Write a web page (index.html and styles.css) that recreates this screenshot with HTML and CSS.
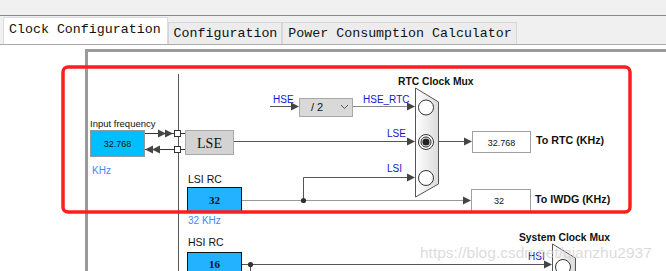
FILE: index.html
```html
<!DOCTYPE html>
<html>
<head>
<meta charset="utf-8">
<link rel="stylesheet" href="styles.css">
</head>
<body>
<div class="app">
  <div class="topbar"></div>
  <div class="tabs">
    <div class="tab active">Clock Configuration</div>
    <div class="tab">Configuration</div>
    <div class="tab">Power Consumption Calculator</div>
  </div>
  <div class="canvas">
    <svg class="diagram" width="666" height="226" viewBox="0 45 666 226" xmlns="http://www.w3.org/2000/svg">
      <defs>
        <linearGradient id="muxg" x1="0" y1="0" x2="1" y2="0">
          <stop offset="0" stop-color="#ffffff"/>
          <stop offset="1" stop-color="#dcdcdc"/>
        </linearGradient>
      </defs>
      <!-- canvas frame -->
      <path d="M86.5 271 V50.5 H666" fill="none" stroke="#9a9a9a" stroke-width="3"/>
      <!-- vertical bus -->
      <line x1="178.5" y1="74" x2="178.5" y2="271" stroke="#555" stroke-width="1"/>

      <!-- input frequency -->
      <text class="lbl" x="90" y="127">Input frequency</text>
      <rect x="90.5" y="130.5" width="54" height="26" fill="#00bfff" stroke="#8a9aa0"/>
      <text class="num" x="117.5" y="147" text-anchor="middle">32.768</text>
      <text class="khz" x="92" y="174">KHz</text>

      <line x1="145" y1="133.5" x2="174" y2="133.5" stroke="#333"/>
      <path d="M158 129.5 L166 133.5 L158 137.5 Z M165 129.5 L173 133.5 L165 137.5 Z" fill="#444"/>
      <line x1="145" y1="149.5" x2="174" y2="149.5" stroke="#333"/>
      <path d="M160 145.5 L152 149.5 L160 153.5 Z M153 145.5 L145 149.5 L153 153.5 Z" fill="#444"/>
      <rect x="174.5" y="130.5" width="6" height="6" fill="#fff" stroke="#333"/>
      <rect x="174.5" y="146.5" width="6" height="6" fill="#fff" stroke="#333"/>
      <line x1="181" y1="133.5" x2="185" y2="133.5" stroke="#333"/>
      <line x1="181" y1="149.5" x2="185" y2="149.5" stroke="#333"/>

      <!-- LSE -->
      <rect x="185.5" y="130.5" width="48" height="24" fill="#d3d3d3" stroke="#a8a8a8"/>
      <text class="serif" x="209.5" y="147.5" text-anchor="middle">LSE</text>
      <line x1="234" y1="141.5" x2="408" y2="141.5" stroke="#555"/>
      <path d="M407 137.5 L415 141.5 L407 145.5 Z" fill="#444"/>
      <text class="sig" x="387" y="137">LSE</text>

      <!-- HSE / divider -->
      <text class="sig" x="273" y="103">HSE</text>
      <line x1="270" y1="106.5" x2="292" y2="106.5" stroke="#555"/>
      <path d="M291 102.5 L299 106.5 L291 110.5 Z" fill="#444"/>
      <rect x="299.5" y="98.5" width="53" height="18" fill="#d9d9d9" stroke="#a8a8a8"/>
      <text class="div" x="311" y="111">/ 2</text>
      <path d="M341 105 L344.5 108.5 L348 105" fill="none" stroke="#555"/>
      <line x1="353" y1="106.5" x2="408" y2="106.5" stroke="#888"/>
      <path d="M407 102.5 L415 106.5 L407 110.5 Z" fill="#444"/>
      <text class="sig" x="363" y="103">HSE_RTC</text>

      <!-- LSI -->
      <text class="sig" x="387" y="172">LSI</text>
      <path d="M303.5 200 V177.5 H408" fill="none" stroke="#555"/>
      <path d="M407 173.5 L415 177.5 L407 181.5 Z" fill="#444"/>

      <!-- RTC mux -->
      <text class="bold" x="398" y="85">RTC Clock Mux</text>
      <path d="M415.5 88 L438.5 102 L438.5 184 L415.5 197 Z" fill="url(#muxg)" stroke="#555"/>
      <circle cx="426" cy="107.5" r="7.5" fill="#fff" stroke="#333"/>
      <circle cx="426" cy="142" r="7.5" fill="#fff" stroke="#333"/>
      <circle cx="426" cy="142" r="5" fill="#fff" stroke="#222"/>
      <circle cx="426" cy="142" r="3.6" fill="#222"/>
      <circle cx="426" cy="178" r="7.5" fill="#fff" stroke="#333"/>

      <line x1="438" y1="141.5" x2="465" y2="141.5" stroke="#555"/>
      <path d="M464 137.5 L472 141.5 L464 145.5 Z" fill="#444"/>
      <rect x="472.5" y="131.5" width="58" height="21" fill="#fff" stroke="#a0a0a0"/>
      <text class="num" x="501.5" y="145.5" text-anchor="middle">32.768</text>
      <text class="bold2" x="536" y="144">To RTC (KHz)</text>

      <!-- LSI RC -->
      <text class="lbl2" x="188" y="183">LSI RC</text>
      <rect x="187.5" y="187.5" width="54" height="24" fill="#22b2ff" stroke="#111"/>
      <text class="serifb" x="214.5" y="203.5" text-anchor="middle">32</text>
      <line x1="242" y1="200.5" x2="464" y2="200.5" stroke="#999"/>
      <circle cx="303.5" cy="200.5" r="2.6" fill="#333"/>
      <path d="M463 196.5 L471 200.5 L463 204.5 Z" fill="#444"/>
      <rect x="471.5" y="189.5" width="59" height="22" fill="#fff" stroke="#a0a0a0"/>
      <text class="num" x="499" y="203.5" text-anchor="middle">32</text>
      <text class="bold2" x="535" y="203">To IWDG (KHz)</text>
      <text class="khz" x="188" y="224">32 KHz</text>

      <!-- HSI RC -->
      <text class="lbl2" x="188" y="246">HSI RC</text>
      <rect x="187.5" y="252.5" width="54" height="24" fill="#22b2ff" stroke="#111"/>
      <text class="serifb" x="214.5" y="268" text-anchor="middle">16</text>
      <line x1="242" y1="264.5" x2="545" y2="264.5" stroke="#555"/>
      <line x1="250.5" y1="264" x2="250.5" y2="271" stroke="#555"/>
      <circle cx="250.5" cy="264.5" r="2.6" fill="#333"/>
      <path d="M544 260.5 L552 264.5 L544 268.5 Z" fill="#444"/>
      <text class="sig" x="528" y="260">HSI</text>

      <!-- System clock mux -->
      <text class="bold" x="519" y="241">System Clock Mux</text>
      <path d="M552.5 244 L575.5 258 L575.5 290 L552.5 300 Z" fill="url(#muxg)" stroke="#555"/>
      <circle cx="563" cy="267" r="7.5" fill="#fff" stroke="#333"/>

      <!-- highlight frame -->
      <rect x="63" y="67" width="567" height="145" rx="5" ry="5" fill="none" stroke="#ff1e1e" stroke-width="3.5"/>

      <!-- watermark -->
      <text class="wm" x="420" y="258">https://blog.csdn.net/qianzhu2937</text>
    </svg>
  </div>
</div>
</body>
</html>
```

FILE: styles.css
```css
html, body {
  margin: 0;
  padding: 0;
  background: #ffffff;
}
.app {
  width: 666px;
  height: 271px;
  overflow: hidden;
  display: flex;
  flex-direction: column;
}
.topbar {
  height: 15px;
  background: #f0f0f0;
  border-bottom: 1px solid #8a8a8a;
}
.tabs {
  height: 28px;
  display: flex;
  align-items: flex-end;
  padding-left: 3px;
  background: #f0f0f0;
  border-bottom: 1px solid #a9a9a9;
}
.tab {
  font-family: "Liberation Mono", monospace;
  font-size: 13.3px;
  color: #111;
  height: 22px;
  line-height: 22px;
  padding: 0 4px 0 5px;
  background: #ececec;
  border: 1px solid #d6d6d6;
  border-bottom: none;
  margin-right: 0;
  box-sizing: border-box;
}
.tab.active {
  height: 27px;
  line-height: 24px;
  background: #ffffff;
  padding: 0 6px 0 5px;
  border-color: #dcdcdc;
}
.canvas {
  flex: 1;
  background: #ffffff;
}
.diagram {
  display: block;
}
.lbl {
  font-family: "Liberation Sans", Arial, sans-serif;
  font-size: 9.5px;
  fill: #111;
}
.lbl2 {
  font-family: "Liberation Sans", Arial, sans-serif;
  font-size: 10.5px;
  fill: #111;
}
.num {
  font-family: "Liberation Sans", Arial, sans-serif;
  font-size: 9px;
  fill: #111;
}
.khz {
  font-family: "Liberation Sans", Arial, sans-serif;
  font-size: 10px;
  fill: #3b8cff;
}
.sig {
  font-family: "Liberation Sans", Arial, sans-serif;
  font-size: 10px;
  fill: #1616c8;
}
.div {
  font-family: "Liberation Sans", Arial, sans-serif;
  font-size: 11px;
  fill: #111;
}
.serif {
  font-family: "Liberation Serif", serif;
  font-size: 14px;
  fill: #111;
}
.serifb {
  font-family: "Liberation Serif", serif;
  font-size: 11px;
  font-weight: bold;
  fill: #111;
}
.bold {
  font-family: "Liberation Sans", Arial, sans-serif;
  font-size: 10.3px;
  font-weight: bold;
  fill: #111;
}
.bold2 {
  font-family: "Liberation Sans", Arial, sans-serif;
  font-size: 10.7px;
  font-weight: bold;
  fill: #111;
}
.wm {
  font-family: "Liberation Sans", Arial, sans-serif;
  font-size: 15.5px;
  fill: #cfcfcf;
  fill-opacity: 0.75;
}
```
